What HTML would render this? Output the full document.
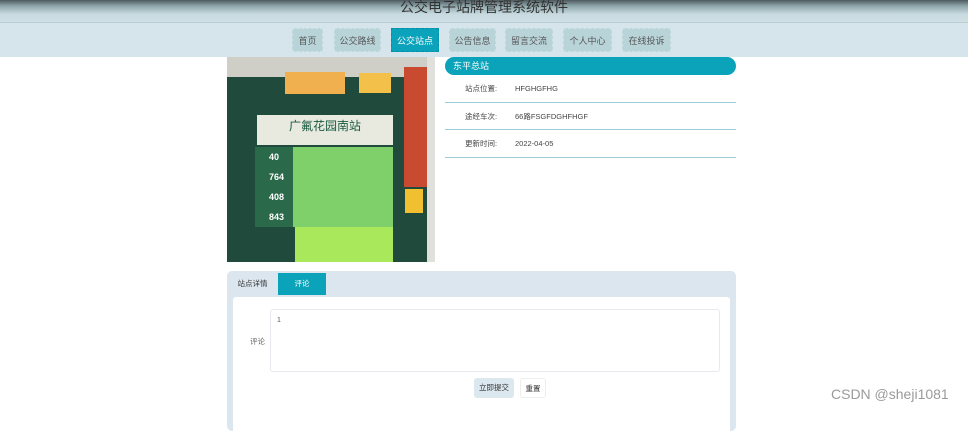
<!DOCTYPE html>
<html><head><meta charset="utf-8"><style>
*{margin:0;padding:0;box-sizing:border-box}
body{width:968px;height:413px;overflow:hidden;background:#fff;font-family:"Liberation Sans","Noto Sans CJK SC",sans-serif;position:relative}
.hdr{position:absolute;left:0;top:0;width:968px;height:22px;background:linear-gradient(#4d5a5e 0,#8fa6ab 6px,#c7dadf 14px,#cfe0e4 22px);}
.hdr .t{position:absolute;left:0;width:968px;text-align:center;top:-3px;font-size:14px;color:#333}
.nav{position:absolute;left:0;top:22px;width:968px;height:35px;background:#d6e4ec;border-top:1px solid #bccdd4}
.nb{position:absolute;top:5px;height:24px;background:#b9d4d9;font-size:9px;color:#555;text-align:center;line-height:24px;border:1px dashed #cfe2e5}
.nb.a{background:#0ba3bb;color:#fff;border-color:#0a8ea3}
.img{position:absolute;left:227px;top:57px;width:208px;height:205px;background:#1f4a3c;overflow:hidden}
.info{position:absolute;left:445px;top:57px;width:291px}
.ih{height:18px;background:#0aa3b9;border-radius:9px;border-top-left-radius:9px;color:#fff;font-size:9px;line-height:18px;padding-left:8px}
.row{height:27.5px;border-bottom:1.5px solid #9fcbd6;font-size:7.5px;color:#444;line-height:27px;position:relative}
.row span{position:absolute;left:20px}.row b{position:absolute;left:70px;font-weight:normal}
.tabs{position:absolute;left:227px;top:271px;width:509px;height:160px;background:#dbe6ee;border-radius:5px}
.tab{position:absolute;top:2px;height:22px;font-size:7.5px;line-height:22px;text-align:center}
.inner{position:absolute;left:6px;top:26px;width:497px;height:140px;background:#fff;border-radius:3px}
.ta{position:absolute;left:37px;top:12px;width:450px;height:63px;border:1px solid #e6e9ee;border-radius:3px;font-size:7px;color:#555;padding:7px 6px}
.btn{position:absolute;top:81px;height:20px;font-size:7.5px;line-height:20px;text-align:center;border-radius:3px}
.wm{position:absolute;left:831px;top:386px;font-size:14px;color:#9a9a9a}
</style></head><body>
<div class="hdr"><div class="t">公交电子站牌管理系统软件</div></div>
<div class="nav">
<div class="nb" style="left:292px;width:31px">首页</div>
<div class="nb" style="left:334px;width:47px">公交路线</div>
<div class="nb a" style="left:391px;width:48px">公交站点</div>
<div class="nb" style="left:449px;width:47px">公告信息</div>
<div class="nb" style="left:505px;width:48px">留言交流</div>
<div class="nb" style="left:563px;width:49px">个人中心</div>
<div class="nb" style="left:622px;width:49px">在线投诉</div>
</div>
<div class="img">
<div style="position:absolute;left:0;top:0;width:208px;height:20px;background:#cfcfc8"></div>
<div style="position:absolute;left:58px;top:15px;width:60px;height:22px;background:#f0b050"></div>
<div style="position:absolute;left:132px;top:16px;width:32px;height:20px;background:#f3c04a"></div>
<div style="position:absolute;left:177px;top:10px;width:26px;height:120px;background:#c84a30"></div>
<div style="position:absolute;left:30px;top:58px;width:136px;height:30px;background:#e8eadf;font-size:12px;color:#1a5a40;text-align:center;line-height:22px">广氟花园南站</div>
<div style="position:absolute;left:28px;top:90px;width:138px;height:80px;background:#7fd06a"></div>
<div style="position:absolute;left:68px;top:170px;width:98px;height:35px;background:#a8e85a"></div>
<div style="position:absolute;left:28px;top:90px;width:38px;height:80px;background:#2a6a4a;color:#fff;font-size:9px;font-weight:bold;line-height:20px;padding-left:14px">40<br>764<br>408<br>843</div>
<div style="position:absolute;left:178px;top:132px;width:18px;height:24px;background:#f0c030"></div>
<div style="position:absolute;left:200px;top:0;width:8px;height:205px;background:#e0e0dc"></div>
</div>
<div class="info">
<div class="ih">东平总站</div>
<div class="row"><span>站点位置:</span><b>HFGHGFHG</b></div>
<div class="row"><span>途经车次:</span><b>66路FSGFDGHFHGF</b></div>
<div class="row"><span>更新时间:</span><b>2022-04-05</b></div>
</div>
<div class="tabs">
<div class="tab" style="left:0;width:51px;color:#333">站点详情</div>
<div class="tab" style="left:51px;width:48px;background:#0aa3b9;color:#fff">评论</div>
<div class="inner">
<div style="position:absolute;left:17px;top:39px;font-size:7.5px;color:#666">评论</div>
<div class="ta">1</div>
<div class="btn" style="left:241px;width:40px;background:#dce8f0;color:#333">立即提交</div>
<div class="btn" style="left:287px;width:26px;background:#fff;border:1px solid #eee;color:#333">重置</div>
</div>
</div>
<div class="wm">CSDN @sheji1081</div>
</body></html>
